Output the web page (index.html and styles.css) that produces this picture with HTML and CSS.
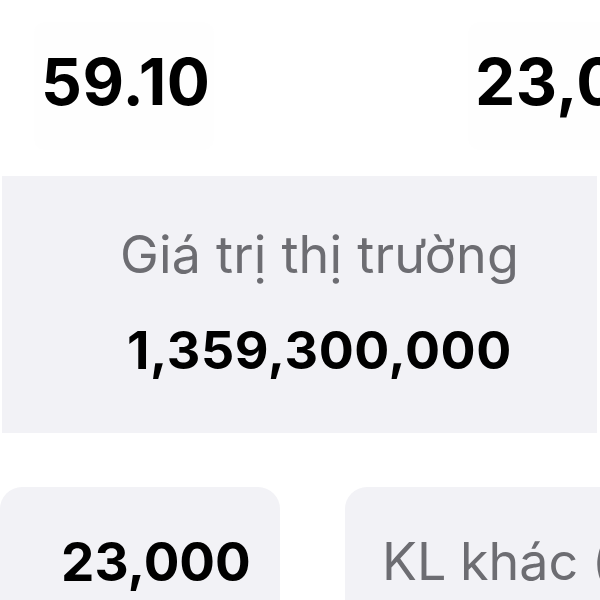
FILE: index.html
```html
<!DOCTYPE html>
<html lang="vi">
<head>
    <meta charset="UTF-8">
    <meta name="viewport" content="width=device-width, initial-scale=1.0">
    <title>Thông tin cổ phiếu</title>
    <link rel="stylesheet" href="styles.css">
</head>
<body>
    <div class="page">
        <div class="stats-top">
            <div class="stat">
                <div class="stat__value">59.10</div>
            </div>
            <div class="stat">
                <div class="stat__value">23,000</div>
            </div>
        </div>

        <div class="market">
            <div class="market__label">Giá trị thị trường</div>
            <div class="market__value">1,359,300,000</div>
        </div>

        <div class="stats-bottom">
            <div class="card card--value">
                <div class="card__value">23,000</div>
            </div>
            <div class="card card--label">
                <div class="card__label">KL khác (cp)</div>
            </div>
        </div>
    </div>
</body>
</html>
```

FILE: styles.css
```css
/* Reset */
* {
    margin: 0;
    padding: 0;
    box-sizing: border-box;
}
body {
    font-family: Inter, "Liberation Sans", Arial, sans-serif;
    background-color: #fff;
    color: #000;
    overflow: hidden;
}
.page {
    width: 600px;
    height: 600px;
    overflow: hidden;
}
.stats-top {
    display: grid;
    grid-template-columns: 434px 434px;
    padding: 22px 0 0 34px;
    height: 176px;
}
.stat {
    background-color: #fefefe;
    border-radius: 12px;
    height: 128px;
    width: 180px;
    padding: 28px 0 0 7px;
}
.stat__value {
    font-size: 64px;
    font-weight: 700;
    line-height: 1;
    letter-spacing: 0.5px;
    white-space: nowrap;
}
.market {
    margin-left: 2px;
    width: 595px;
    height: 257px;
    background-color: #f2f2f6;
    display: flex;
    flex-direction: column;
    align-items: center;
    padding: 48px 0 0 40px;
    gap: 34px;
}
.market__label {
    font-size: 52px;
    color: #6d6d72;
    line-height: 1.2;
    letter-spacing: 0.2px;
}
.market__value {
    font-size: 52px;
    font-weight: 700;
    line-height: 1.2;
    letter-spacing: 0.6px;
}
.stats-bottom {
    display: flex;
    gap: 65px;
    margin-top: 54px;
}
.card {
    background-color: #f2f2f6;
    border-radius: 22px 22px 0 0;
    height: 160px;
    padding-top: 44px;
    flex-shrink: 0;
}
.card--value {
    width: 280px;
    padding-left: 61px;
}
.card--label {
    width: 320px;
    padding-left: 37px;
}
.card__value {
    font-size: 53px;
    font-weight: 700;
    line-height: 1.2;
}
.card__label {
    font-size: 52px;
    color: #6d6d72;
    line-height: 1.2;
    white-space: nowrap;
    word-spacing: -1px;
}
```
